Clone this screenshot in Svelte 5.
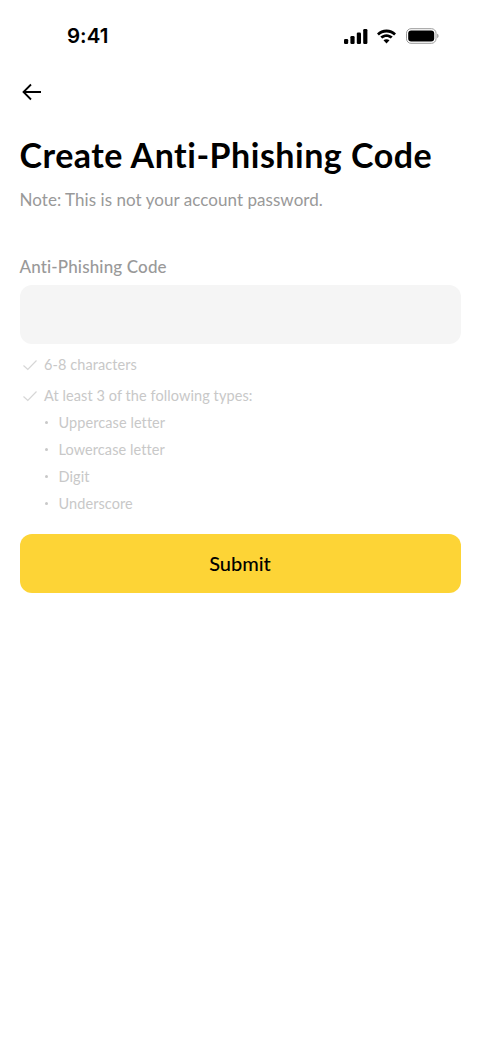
<script>
  const rules = [
    { text: '6-8 characters', subs: [] },
    {
      text: 'At least 3 of the following types:',
      subs: ['Uppercase letter', 'Lowercase letter', 'Digit', 'Underscore'],
    },
  ];
</script>

<div class="page">
  <div class="status">
    <span class="time">9:41</span>
    <div class="status-icons">
      <svg width="24" height="15" viewBox="0 0 24 15">
        <rect x="0" y="10" width="4.200" height="5" rx="1.200" />
        <rect x="6.400" y="7" width="4.200" height="8" rx="1.200" />
        <rect x="12.800" y="3.500" width="4.200" height="11.500" rx="1.200" />
        <rect x="19.200" y="0" width="4.200" height="15" rx="1.200" />
      </svg>
      <svg width="21" height="15" viewBox="0 0 21 15">
        <path d="M10.500 3.400c3 0 5.600 1.100 7.600 3l1.900-2C17.500 1.900 14.200.4 10.500.4S3.500 1.900 1 4.400l1.900 2c2-1.900 4.600-3 7.600-3z" />
        <path d="M10.500 8c1.600 0 3.100.6 4.300 1.600l1.900-2c-1.700-1.500-3.800-2.400-6.200-2.400s-4.500.9-6.200 2.400l1.900 2C7.400 8.600 8.900 8 10.500 8z" />
        <path d="M10.500 10.200c-1.100 0-2.200.4-3 1.100l3 3.200 3-3.200c-.8-.7-1.900-1.100-3-1.100z" />
      </svg>
      <svg class="battery" width="33" height="16" viewBox="0 0 33 16">
        <rect x="0.500" y="0.700" width="29.500" height="14.600" rx="4.500" fill="none" stroke="#9a9a9a" />
        <rect x="2.200" y="2.400" width="26" height="11.200" rx="3" />
        <path d="M31.200 5.800c.9.300 1.300 1.200 1.300 2.200s-.4 1.900-1.300 2.200z" fill="#9a9a9a" />
      </svg>
    </div>
  </div>

  <div class="nav">
    <svg width="24" height="24" viewBox="0 0 24 24" fill="none" stroke="#000" stroke-width="1.800">
      <path d="M21 12H3.500M11 4.500 3.500 12l7.500 7.500" />
    </svg>
  </div>

  <main>
    <h1>Create Anti-Phishing Code</h1>
    <p class="note">Note: This is not your account password.</p>

    <label class="label" for="code">Anti-Phishing Code</label>
    <input id="code" class="field" type="text" />

    <ul class="rules">
      {#each rules as rule}
        <li class="rule">
          <svg width="18" height="18" viewBox="0 0 18 18" fill="none" stroke="#d6d6d6" stroke-width="1.200">
            <path d="M2.500 9.500 6.800 13.500 15.500 4.500" />
          </svg>
          <span>{rule.text}</span>
        </li>
        {#each rule.subs as sub}
          <li class="sub"><i></i><span>{sub}</span></li>
        {/each}
      {/each}
    </ul>

    <button class="submit" type="button">Submit</button>
  </main>
</div>

<style>
  :global(body) {
    margin: 0;
    background: #fff;
  }

  .page {
    width: 480px;
    height: 1040px;
    overflow: hidden;
    background: #fff;
    font-family: Lato, 'Liberation Sans', sans-serif;
    font-variant-ligatures: none;
    color: #000;
  }

  .status {
    height: 70px;
    box-sizing: border-box;
    padding: 21px 41px 0 67px;
    display: flex;
    justify-content: space-between;
    align-items: flex-start;
  }

  .time {
    font-family: Inter, sans-serif;
    font-size: 20.500px;
    line-height: 30px;
    font-weight: 600;
  }

  .status-icons {
    display: flex;
    align-items: center;
    gap: 8px;
    height: 30px;
  }

  .battery {
    margin-left: 1px;
  }

  .nav {
    height: 44px;
    padding-left: 20px;
    display: flex;
    align-items: center;
  }

  main {
    padding: 0 19.500px;
    display: flex;
    flex-direction: column;
  }

  h1 {
    margin: 17px 0 0;
    font-size: 34px;
    line-height: 48px;
    font-weight: 700;
    letter-spacing: 0.500px;
  }

  .note {
    margin: 9px 0 0;
    font-size: 17px;
    line-height: 24px;
    letter-spacing: 0.050px;
    color: #999;
  }

  .label {
    margin-top: 43px;
    font-size: 17px;
    line-height: 24px;
    font-weight: 500;
    letter-spacing: 0.150px;
    color: #999;
  }

  .field {
    display: block;
    box-sizing: border-box;
    width: 100%;
    height: 59px;
    margin-top: 6px;
    border: 0;
    border-radius: 12px;
    background: #f5f5f5;
  }

  .rules {
    list-style: none;
    margin: 7px 0 0;
    padding: 0;
    font-size: 14.500px;
    letter-spacing: 0.080px;
    color: #c8c8c8;
  }

  .rule {
    display: flex;
    align-items: center;
    gap: 5.500px;
    height: 27px;
    padding-left: 1px;
  }

  .rule:first-child {
    margin-bottom: 4px;
  }

  .sub {
    display: flex;
    align-items: center;
    height: 27px;
    padding-left: 25px;
    gap: 11px;
  }

  .sub i {
    width: 3px;
    height: 3px;
    border-radius: 50%;
    background: #c8c8c8;
  }

  .submit {
    height: 59px;
    margin-top: 17px;
    padding: 0 0 2px;
    border: 0;
    border-radius: 12px;
    background: #fdd436;
    font-family: inherit;
    font-size: 20px;
    font-weight: 500;
    color: #000;
  }
</style>
